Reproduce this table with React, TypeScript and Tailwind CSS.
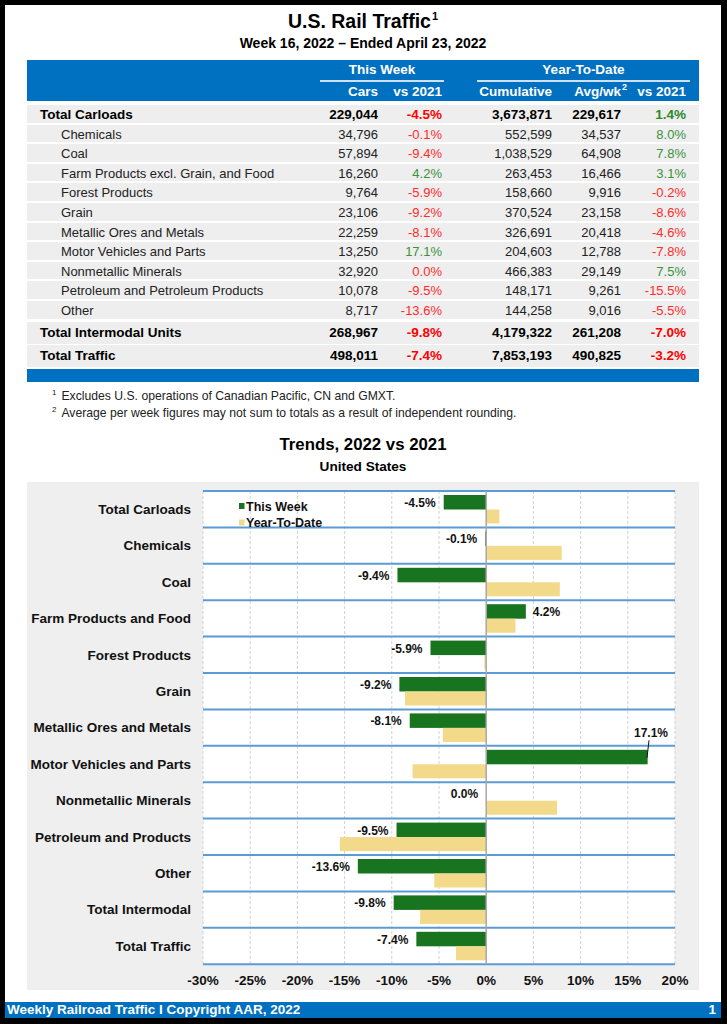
import React from "react";

type Row = {
  label: string;
  bold?: boolean;
  cars: string;
  vw: string;
  cum: string;
  avg: string;
  vy: string;
};

const rows: Row[] = [
  { label: "Total Carloads", bold: true, cars: "229,044", vw: "-4.5%", cum: "3,673,871", avg: "229,617", vy: "1.4%" },
  { label: "Chemicals", cars: "34,796", vw: "-0.1%", cum: "552,599", avg: "34,537", vy: "8.0%" },
  { label: "Coal", cars: "57,894", vw: "-9.4%", cum: "1,038,529", avg: "64,908", vy: "7.8%" },
  { label: "Farm Products excl. Grain, and Food", cars: "16,260", vw: "4.2%", cum: "263,453", avg: "16,466", vy: "3.1%" },
  { label: "Forest Products", cars: "9,764", vw: "-5.9%", cum: "158,660", avg: "9,916", vy: "-0.2%" },
  { label: "Grain", cars: "23,106", vw: "-9.2%", cum: "370,524", avg: "23,158", vy: "-8.6%" },
  { label: "Metallic Ores and Metals", cars: "22,259", vw: "-8.1%", cum: "326,691", avg: "20,418", vy: "-4.6%" },
  { label: "Motor Vehicles and Parts", cars: "13,250", vw: "17.1%", cum: "204,603", avg: "12,788", vy: "-7.8%" },
  { label: "Nonmetallic Minerals", cars: "32,920", vw: "0.0%", cum: "466,383", avg: "29,149", vy: "7.5%" },
  { label: "Petroleum and Petroleum Products", cars: "10,078", vw: "-9.5%", cum: "148,171", avg: "9,261", vy: "-15.5%" },
  { label: "Other", cars: "8,717", vw: "-13.6%", cum: "144,258", avg: "9,016", vy: "-5.5%" },
];

const totals: Row[] = [
  { label: "Total Intermodal Units", bold: true, cars: "268,967", vw: "-9.8%", cum: "4,179,322", avg: "261,208", vy: "-7.0%" },
  { label: "Total Traffic", bold: true, cars: "498,011", vw: "-7.4%", cum: "7,853,193", avg: "490,825", vy: "-3.2%" },
];

const trends: { label: string; tw: number; ytd: number }[] = [
  { label: "Total Carloads", tw: -4.5, ytd: 1.4 },
  { label: "Chemicals", tw: -0.1, ytd: 8.0 },
  { label: "Coal", tw: -9.4, ytd: 7.8 },
  { label: "Farm Products and Food", tw: 4.2, ytd: 3.1 },
  { label: "Forest Products", tw: -5.9, ytd: -0.2 },
  { label: "Grain", tw: -9.2, ytd: -8.6 },
  { label: "Metallic Ores and Metals", tw: -8.1, ytd: -4.6 },
  { label: "Motor Vehicles and Parts", tw: 17.1, ytd: -7.8 },
  { label: "Nonmetallic Minerals", tw: 0.0, ytd: 7.5 },
  { label: "Petroleum and Products", tw: -9.5, ytd: -15.5 },
  { label: "Other", tw: -13.6, ytd: -5.5 },
  { label: "Total Intermodal", tw: -9.8, ytd: -7.0 },
  { label: "Total Traffic", tw: -7.4, ytd: -3.2 },
];

const grid = "grid grid-cols-[1fr_64px_64px_110px_69px_65px_13px] items-center";

const pctColor = (v: string, bold?: boolean) => {
  const neg = v.startsWith("-") || v === "0.0%";
  if (neg) return bold ? "text-[#ff0000]" : "text-[#ff2b2b]";
  return bold ? "text-[#2a8a2a]" : "text-[#3a923a]";
};

const TableRow = ({ r, tall }: { r: Row; tall?: boolean }) => (
  <div
    className={`${grid} bg-[#eeeeee] ${tall ? "h-[22px]" : "h-[17.6px]"} ${
      r.bold ? "font-bold text-[13.5px] text-black" : "text-[13px] text-[#222]"
    }`}
  >
    <div className={r.bold ? "pl-[13px]" : "pl-[34px]"}>{r.label}</div>
    <div className="text-right">{r.cars}</div>
    <div className={`text-right ${pctColor(r.vw, r.bold)}`}>{r.vw}</div>
    <div className="text-right">{r.cum}</div>
    <div className="text-right">{r.avg}</div>
    <div className={`text-right ${pctColor(r.vy, r.bold)}`}>{r.vy}</div>
    <div />
  </div>
);

const RailTable = () => (
  <div className="flex flex-col">
    {/* header */}
    <div className="bg-[#0070c0] h-[41px] text-white font-bold text-[13.5px] flex flex-col">
      <div className={`${grid} h-[22px]`}>
        <div />
        <div className="col-span-2 ml-[6px] mr-[-2px] h-[22px] flex items-center justify-center border-b-2 border-[#cfe2f3] pt-[1px]">
          This Week
        </div>
        <div className="col-span-3 ml-[35px] mr-[-4px] h-[22px] flex items-center justify-center border-b-2 border-[#cfe2f3] pt-[1px]">
          Year-To-Date
        </div>
        <div />
      </div>
      <div className={`${grid} h-[19px]`}>
        <div />
        <div className="text-right">Cars</div>
        <div className="text-right">vs 2021</div>
        <div className="text-right">Cumulative</div>
        <div className="text-right mr-[-6px]">
          Avg/wk<sup className="text-[9px] relative top-[-6px] ml-[1px]">2</sup>
        </div>
        <div className="text-right">vs 2021</div>
        <div />
      </div>
    </div>

    <div className="flex flex-col gap-[2px] pt-[4px]">
      {rows.map((r) => (
        <TableRow key={r.label} r={r} />
      ))}
    </div>
    <div className="flex flex-col gap-[1px] pt-[3.5px]">
      {totals.map((r) => (
        <TableRow key={r.label} r={r} tall />
      ))}
    </div>
    <div className="bg-[#0070c0] h-[13px] mt-[2px]" />
  </div>
);

const TrendChart = () => {
  const left = 176;
  const right = 648;
  const k = (right - left) / 50;
  const x0 = left + 30 * k;
  const top = 9;
  const band = 36.4;
  const xv = (v: number) => x0 + v * k;
  const ticks = [-30, -25, -20, -15, -10, -5, 0, 5, 10, 15, 20];
  const bottom = top + band * trends.length;

  return (
    <div className="bg-[#efefef] h-[508px]">
      <svg width={672} height={508} viewBox="0 0 672 508" className="block">
        <rect x={left} y={top} width={right - left} height={bottom - top} fill="#ffffff" />
        {ticks
          .filter((t) => t !== 0)
          .map((t) => (
            <line
              key={t}
              x1={xv(t)}
              x2={xv(t)}
              y1={top}
              y2={bottom}
              stroke="#d2d2d2"
              strokeWidth={1}
              strokeDasharray="3 2"
            />
          ))}
        {trends.map((d, i) => {
          const t = top + i * band;
          const gx = Math.min(x0, xv(d.tw));
          const yx = Math.min(x0, xv(d.ytd));
          return (
            <g key={d.label}>
              <rect x={gx} y={t + 4} width={Math.abs(d.tw) * k} height={14.5} fill="#19741f" />
              <rect x={yx} y={t + 18.5} width={Math.abs(d.ytd) * k} height={14} fill="#f3d98a" />
              <text
                x={164}
                y={t + 23}
                textAnchor="end"
                fontSize={13.5}
                fontWeight={700}
                fill="#111"
              >
                {d.label}
              </text>
            </g>
          );
        })}
        {Array.from({ length: trends.length + 1 }).map((_, i) => (
          <line
            key={i}
            x1={left}
            x2={right}
            y1={top + i * band}
            y2={top + i * band}
            stroke="#5b9bd5"
            strokeWidth={2}
          />
        ))}
        <line x1={x0} x2={x0} y1={top} y2={bottom} stroke="#a8a8a8" strokeWidth={1.5} />
        {trends.map((d, i) => {
          const t = top + i * band;
          const label = `${d.tw.toFixed(1)}%`;
          if (d.tw > 10) {
            return (
              <g key={d.label}>
                <text x={624} y={t - 9} textAnchor="middle" fontSize={12} fontWeight={700} fill="#111">
                  {label}
                </text>
                <line x1={622} y1={t - 5.5} x2={620} y2={t + 12} stroke="#111" strokeWidth={1} />
              </g>
            );
          }
          if (d.tw > 0) {
            return (
              <text key={d.label} x={xv(d.tw) + 7} y={t + 16} fontSize={12} fontWeight={700} fill="#111">
                {label}
              </text>
            );
          }
          return (
            <text
              key={d.label}
              x={xv(d.tw) - 8}
              y={t + 16}
              textAnchor="end"
              fontSize={12}
              fontWeight={700}
              fill="#111"
            >
              {label}
            </text>
          );
        })}
        {/* legend */}
        <rect x={212} y={21} width={5.5} height={6} fill="#19741f" />
        <text x={219} y={28.5} fontSize={12.5} fontWeight={700} fill="#111">
          This Week
        </text>
        <rect x={212} y={37.5} width={5.5} height={6} fill="#f3d98a" />
        <text x={219} y={44.5} fontSize={12.5} fontWeight={700} fill="#111">
          Year-To-Date
        </text>
        {ticks.map((t) => (
          <text key={t} x={xv(t)} y={503} textAnchor="middle" fontSize={13.5} fontWeight={700} fill="#111">
            {`${t}%`}
          </text>
        ))}
      </svg>
    </div>
  );
};

export default function App() {
  return (
    <div className="w-[727px] h-[1024px] bg-black pt-[5px] pl-[5px] pr-[6px] pb-[6px] font-['Liberation_Sans',Arial,sans-serif]">
      <div className="bg-white h-full flex flex-col">
        <div className="flex flex-col items-center pt-[4px]">
          <h1 className="font-bold text-[19.5px] leading-[24px] text-black">
            U.S. Rail Traffic<sup className="text-[11px] relative top-[-8px] ml-[1px]">1</sup>
          </h1>
          <div className="font-bold text-[14px] leading-[18px] mt-[1px] text-black">
            Week 16, 2022 – Ended April 23, 2022
          </div>
        </div>

        <div className="px-[22px] mt-[8px]">
          <RailTable />
        </div>

        <div className="pl-[47px] pt-[5.5px] text-[12.2px] leading-[17px] text-[#222]">
          <div>
            <sup className="text-[8px] relative top-[-5px] mr-[5px]">1</sup>Excludes U.S. operations of Canadian Pacific, CN and GMXT.
          </div>
          <div>
            <sup className="text-[8px] relative top-[-5px] mr-[5px]">2</sup>Average per week figures may not sum to totals as a result of independent rounding.
          </div>
        </div>

        <div className="flex flex-col items-center mt-[11.5px]">
          <div className="font-bold text-[16.8px] leading-[24px] text-black">Trends, 2022 vs 2021</div>
          <div className="font-bold text-[13.6px] leading-[18px] mt-[1px] text-black">United States</div>
        </div>

        <div className="px-[22px] mt-[6px]">
          <TrendChart />
        </div>

        <div className="mt-auto h-[16px] bg-[#0070c0] text-white font-bold text-[13.5px] leading-[16px] flex justify-between pl-[2px] pr-[5px]">
          <span>Weekly Railroad Traffic I Copyright AAR, 2022</span>
          <span>1</span>
        </div>
      </div>
    </div>
  );
}
